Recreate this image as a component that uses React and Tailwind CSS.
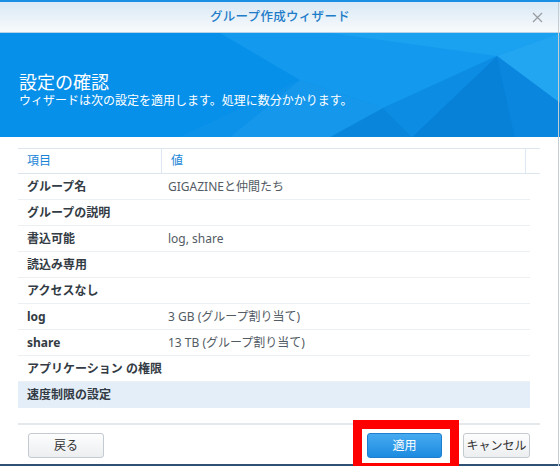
import React from "react";

const rows = [
  ["グループ名", "GIGAZINEと仲間たち"],
  ["グループの説明", ""],
  ["書込可能", "log, share"],
  ["読込み専用", ""],
  ["アクセスなし", ""],
  ["log", "3 GB (グループ割り当て)"],
  ["share", "13 TB (グループ割り当て)"],
  ["アプリケーション の権限", ""],
  ["速度制限の設定", ""],
];

function Facets() {
  return (
    <svg className="absolute inset-0" width="560" height="104" viewBox="0 0 560 104">
      <rect width="560" height="104" fill="#0a8fe9" />
      <polygon points="0,0 260,0 300,47 180,104 0,104" fill="#0790ea" />
      <polygon points="220,0 560,0 497,23 383,75 300,47" fill="#139aee" />
      <polygon points="330,0 560,0 497,23" fill="#1aa1f0" />
      <polygon points="497,23 560,0 560,70" fill="#22a6f1" />
      <polygon points="497,23 560,70 560,104 515,104" fill="#0b86de" />
      <polygon points="497,23 515,104 412,104" fill="#0781d8" />
      <polygon points="497,23 412,104 383,75" fill="#0d8ce4" />
      <polygon points="383,75 412,104 330,104" fill="#0a85dc" />
      <polygon points="300,47 383,75 330,104 230,104" fill="#1598ec" />
      <polygon points="180,104 300,47 230,104" fill="#0d92ea" />
    </svg>
  );
}

export default function App() {
  return (
    <div className="relative w-[560px] h-[466px] bg-white overflow-hidden font-['Noto_Sans','Noto_Sans_CJK_JP',sans-serif] text-[12px]">
      <div className="h-[2px] bg-[#1a8fe3]" />
      <div className="relative h-[31px] bg-gradient-to-b from-[#d9e9f6] to-[#f8fafb] border-b border-[#b7d3ea] flex items-center justify-center">
        <span className="text-[12.5px] font-medium text-[#1f7cc9] tracking-[0.3px]">グループ作成ウィザード</span>
        <svg className="absolute left-[532px] top-[10px]" width="11" height="11" viewBox="0 0 11 11">
          <path d="M1 1 L10 10 M10 1 L1 10" stroke="#9a9ea3" strokeWidth="1.3" />
        </svg>
      </div>
      <div className="relative h-[104px]">
        <Facets />
        <div className="relative pl-[19px] pt-[38px] text-white">
          <div className="text-[18px] leading-[22px]">設定の確認</div>
          <div className="text-[12px] leading-[16px]">ウィザードは次の設定を適用します。処理に数分かかります。</div>
        </div>
      </div>
      <div className="pl-[18px] pt-[11px]">
        <div className="w-[522px] h-[26px] flex border-y border-[#dde6ee] text-[#1a85d6]">
          <div className="w-[143px] pl-[9px] flex items-center">項目</div>
          <div className="w-[364px] pl-[9px] flex items-center border-l border-[#dce8f4]">値</div>
          <div className="flex-1 border-l border-[#dce8f4]" />
        </div>
        {rows.map(([k, v], i) => (
          <div
            key={i}
            className={
              i === rows.length - 1
                ? "w-[512px] h-[26px] flex items-center bg-[#e4eef8]"
                : "w-[512px] h-[26px] flex items-center border-b border-[#edf0f3]"
            }
          >
            <div className="w-[143px] shrink-0 pl-[9px] font-bold text-[#333b44] whitespace-nowrap">{k}</div>
            <div className="pl-[7px] text-[#535b64] whitespace-nowrap">{v}</div>
          </div>
        ))}
        <div className="mt-[15px] w-[522px] h-[2px] bg-[#e6e9ec]" />
      </div>
      <div className="flex items-center pt-[8px] pl-[28px]">
        <button className="w-[76px] h-[25px] rounded-[3px] border border-[#c3cad1] bg-gradient-to-b from-[#fdfdfd] to-[#eceef0] text-[#333] text-[12px]">
          戻る
        </button>
        <button className="ml-[263px] w-[75px] h-[25px] rounded-[3px] border border-[#1f7fcf] bg-gradient-to-b from-[#45aaf0] to-[#1b8be0] text-white text-[12px]">
          適用
        </button>
        <button className="ml-[21px] w-[67px] h-[25px] rounded-[3px] border border-[#c3cad1] bg-gradient-to-b from-[#fdfdfd] to-[#eceef0] text-[#333] text-[12px]">
          キャンセル
        </button>
      </div>
      <div className="absolute left-0 right-0 top-[464px] h-[2px] bg-[#2f5173]" />
      <div className="absolute left-[558px] top-[2px] bottom-0 w-[1px] bg-[#c4ccd4]" />
      <div className="absolute left-[353px] top-[420px] w-[106px] h-[52px] border-[9px] border-[#ff0000]" />
    </div>
  );
}
